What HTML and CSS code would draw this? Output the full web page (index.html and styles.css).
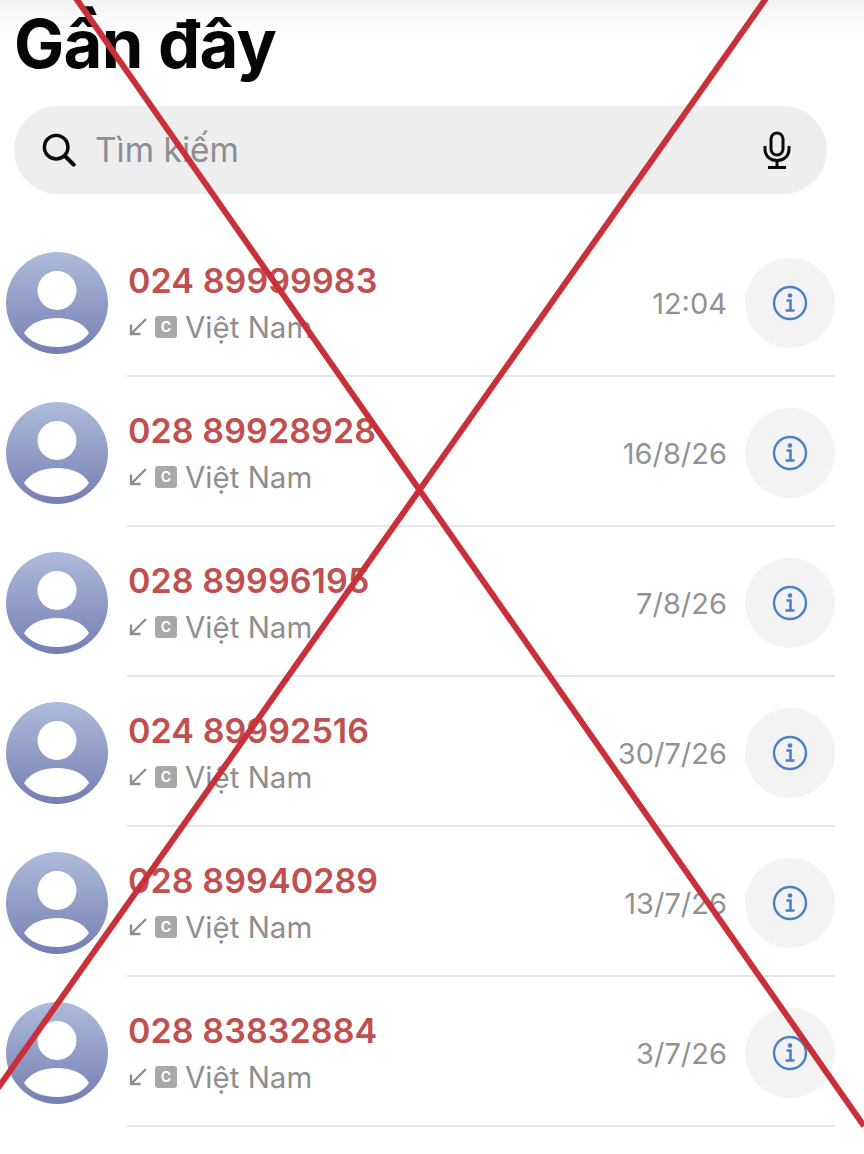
FILE: index.html
```html
<!DOCTYPE html>
<html>
<head>
  <meta charset="UTF-8">
  <meta name="viewport" content="width=device-width, initial-scale=1">
  <title>Gần đây</title>
  <link rel="stylesheet" href="styles.css">
</head>
<body>

<svg class="defs" width="0" height="0">
  <defs>
    <linearGradient id="avatar-fill" x1="0" y1="0" x2="0" y2="1">
      <stop offset="0" stop-color="#aebcda"/>
      <stop offset="1" stop-color="#747eb3"/>
    </linearGradient>
    <symbol id="avatar" viewBox="0 0 102 102">
      <circle cx="51" cy="51" r="51" fill="url(#avatar-fill)"/>
      <circle cx="51" cy="38.5" r="19.5" fill="#fff"/>
      <path d="M18 81C24 71 37 66 51 66s27 5 32 15c-6 9-18 14-32 14s-27-5-33-14z" fill="#fff"/>
    </symbol>
    <symbol id="incoming" viewBox="0 0 18 18">
      <path d="M17 1 2 16M2 6.500V16h9.500" fill="none" stroke="#8e8e8e" stroke-width="2.400"/>
    </symbol>
    <symbol id="info" viewBox="0 0 36 36">
      <circle cx="18" cy="18" r="16" fill="none" stroke="#4c80c6" stroke-width="2.4"/>
      <circle cx="18" cy="10.500" r="2.300" fill="#4c80c6"/>
      <path d="M14.500 15.500H18.500V25M13.500 25.500H22.500" fill="none" stroke="#4c80c6" stroke-width="2.600"/>
    </symbol>
  </defs>
</svg>

<div class="page">
  <h1 class="title">Gần đây</h1>

  <div class="search">
    <svg class="search-icon" viewBox="0 0 36 36">
      <circle cx="15" cy="15" r="12.500" fill="none" stroke="#0a0a0a" stroke-width="3.600"/>
      <path d="M24 24 33.500 33.500" fill="none" stroke="#0a0a0a" stroke-width="4.400" stroke-linecap="round"/>
    </svg>
    <span class="search-text">Tìm kiếm</span>
    <svg class="mic-icon" viewBox="0 0 28 38">
      <rect x="8" y="2" width="12" height="22" rx="6" fill="none" stroke="#0a0a0a" stroke-width="3"/>
      <path d="M2 15v3c0 7 5 11.500 12 11.500S26 25 26 18v-3M14 29.500V36M5 36.500H23" fill="none" stroke="#0a0a0a" stroke-width="3"/>
    </svg>
  </div>

  <div class="list">
    <div class="row">
      <svg class="avatar"><use href="#avatar"/></svg>
      <div class="row-main">
        <div class="row-text">
          <div class="number">024 89999983</div>
          <div class="meta"><svg class="arrow"><use href="#incoming"/></svg><span class="badge">C</span><span>Việt Nam</span></div>
        </div>
        <div class="time">12:04</div>
        <div class="info-btn"><svg class="info-icon"><use href="#info"/></svg></div>
      </div>
    </div>
    <div class="row">
      <svg class="avatar"><use href="#avatar"/></svg>
      <div class="row-main">
        <div class="row-text">
          <div class="number">028 89928928</div>
          <div class="meta"><svg class="arrow"><use href="#incoming"/></svg><span class="badge">C</span><span>Việt Nam</span></div>
        </div>
        <div class="time">16/8/26</div>
        <div class="info-btn"><svg class="info-icon"><use href="#info"/></svg></div>
      </div>
    </div>
    <div class="row">
      <svg class="avatar"><use href="#avatar"/></svg>
      <div class="row-main">
        <div class="row-text">
          <div class="number">028 89996195</div>
          <div class="meta"><svg class="arrow"><use href="#incoming"/></svg><span class="badge">C</span><span>Việt Nam</span></div>
        </div>
        <div class="time">7/8/26</div>
        <div class="info-btn"><svg class="info-icon"><use href="#info"/></svg></div>
      </div>
    </div>
    <div class="row">
      <svg class="avatar"><use href="#avatar"/></svg>
      <div class="row-main">
        <div class="row-text">
          <div class="number">024 89992516</div>
          <div class="meta"><svg class="arrow"><use href="#incoming"/></svg><span class="badge">C</span><span>Việt Nam</span></div>
        </div>
        <div class="time">30/7/26</div>
        <div class="info-btn"><svg class="info-icon"><use href="#info"/></svg></div>
      </div>
    </div>
    <div class="row">
      <svg class="avatar"><use href="#avatar"/></svg>
      <div class="row-main">
        <div class="row-text">
          <div class="number">028 89940289</div>
          <div class="meta"><svg class="arrow"><use href="#incoming"/></svg><span class="badge">C</span><span>Việt Nam</span></div>
        </div>
        <div class="time">13/7/26</div>
        <div class="info-btn"><svg class="info-icon"><use href="#info"/></svg></div>
      </div>
    </div>
    <div class="row">
      <svg class="avatar"><use href="#avatar"/></svg>
      <div class="row-main">
        <div class="row-text">
          <div class="number">028 83832884</div>
          <div class="meta"><svg class="arrow"><use href="#incoming"/></svg><span class="badge">C</span><span>Việt Nam</span></div>
        </div>
        <div class="time">3/7/26</div>
        <div class="info-btn"><svg class="info-icon"><use href="#info"/></svg></div>
      </div>
    </div>
  </div>

  <svg class="cross" viewBox="0 0 864 1154">
    <path d="M75 -3 864 1126M767 -3 -2 1088" fill="none" stroke="#c9303a" stroke-width="6"/>
  </svg>
</div>

</body>
</html>
```

FILE: styles.css
```css
* {
  box-sizing: border-box;
}

html, body {
  margin: 0;
  padding: 0;
}

body {
  background: #fff;
  font-family: Inter, "Liberation Sans", sans-serif;
}

.defs {
  display: block;
  height: 0;
}

.page {
  position: relative;
  width: 864px;
  height: 1154px;
  overflow: hidden;
  background: linear-gradient(to bottom, #f1f1f1, #fbfbfb 20px, #fff 44px);
}

.title {
  margin: 0;
  padding: 8px 0 0 14px;
  height: 106px;
  font-size: 67px;
  line-height: 72px;
  font-weight: 700;
  letter-spacing: -0.7px;
  color: #060606;
}

/* search */
.search {
  display: flex;
  align-items: center;
  width: 813px;
  height: 88px;
  margin-left: 14px;
  padding: 0 36px 0 28px;
  border-radius: 44px;
  background: #eeeeee;
}

.search-icon {
  width: 34px;
  height: 34px;
  flex: none;
}

.search-text {
  flex: 1;
  margin-left: 19px;
  font-size: 33.500px;
  color: #8d8d92;
}

.mic-icon {
  width: 28px;
  height: 38px;
  flex: none;
}

/* list */
.list {
  margin-top: 33px;
}

.row {
  display: flex;
  align-items: center;
  height: 150px;
  padding: 0 29px 0 6px;
}

.avatar {
  width: 102px;
  height: 102px;
  flex: none;
  margin: 2px 19px 0 0;
}

.row-main {
  flex: 1;
  display: flex;
  align-items: center;
  align-self: stretch;
  padding-top: 4px;
  border-bottom: 2px solid #e6e6e8;
}

.row-text {
  flex: 1;
  padding-left: 1px;
}

.number {
  font-size: 34px;
  line-height: 42px;
  font-weight: 600;
  letter-spacing: 0.1px;
  color: #c0504f;
}

.meta {
  display: flex;
  align-items: center;
  margin-top: 6px;
  font-size: 29.500px;
  line-height: 38px;
  color: #8e8e8e;
}

.arrow {
  width: 18px;
  height: 18px;
  margin-left: 1px;
}

.badge {
  width: 22px;
  height: 22px;
  margin: 0 8px 0 8px;
  border-radius: 3px;
  background: #a8a8a8;
  color: #fff;
  font-size: 14px;
  line-height: 22px;
  font-weight: 700;
  text-align: center;
}

.time {
  margin-right: 18px;
  font-size: 29px;
  color: #929292;
}

.info-btn {
  display: flex;
  align-items: center;
  justify-content: center;
  width: 90px;
  height: 90px;
  border-radius: 50%;
  background: #f3f3f4;
}

.info-icon {
  width: 36px;
  height: 36px;
}

/* big red cross over the whole shot */
.cross {
  position: absolute;
  top: 0;
  left: 0;
  width: 864px;
  height: 1154px;
  pointer-events: none;
}
```
